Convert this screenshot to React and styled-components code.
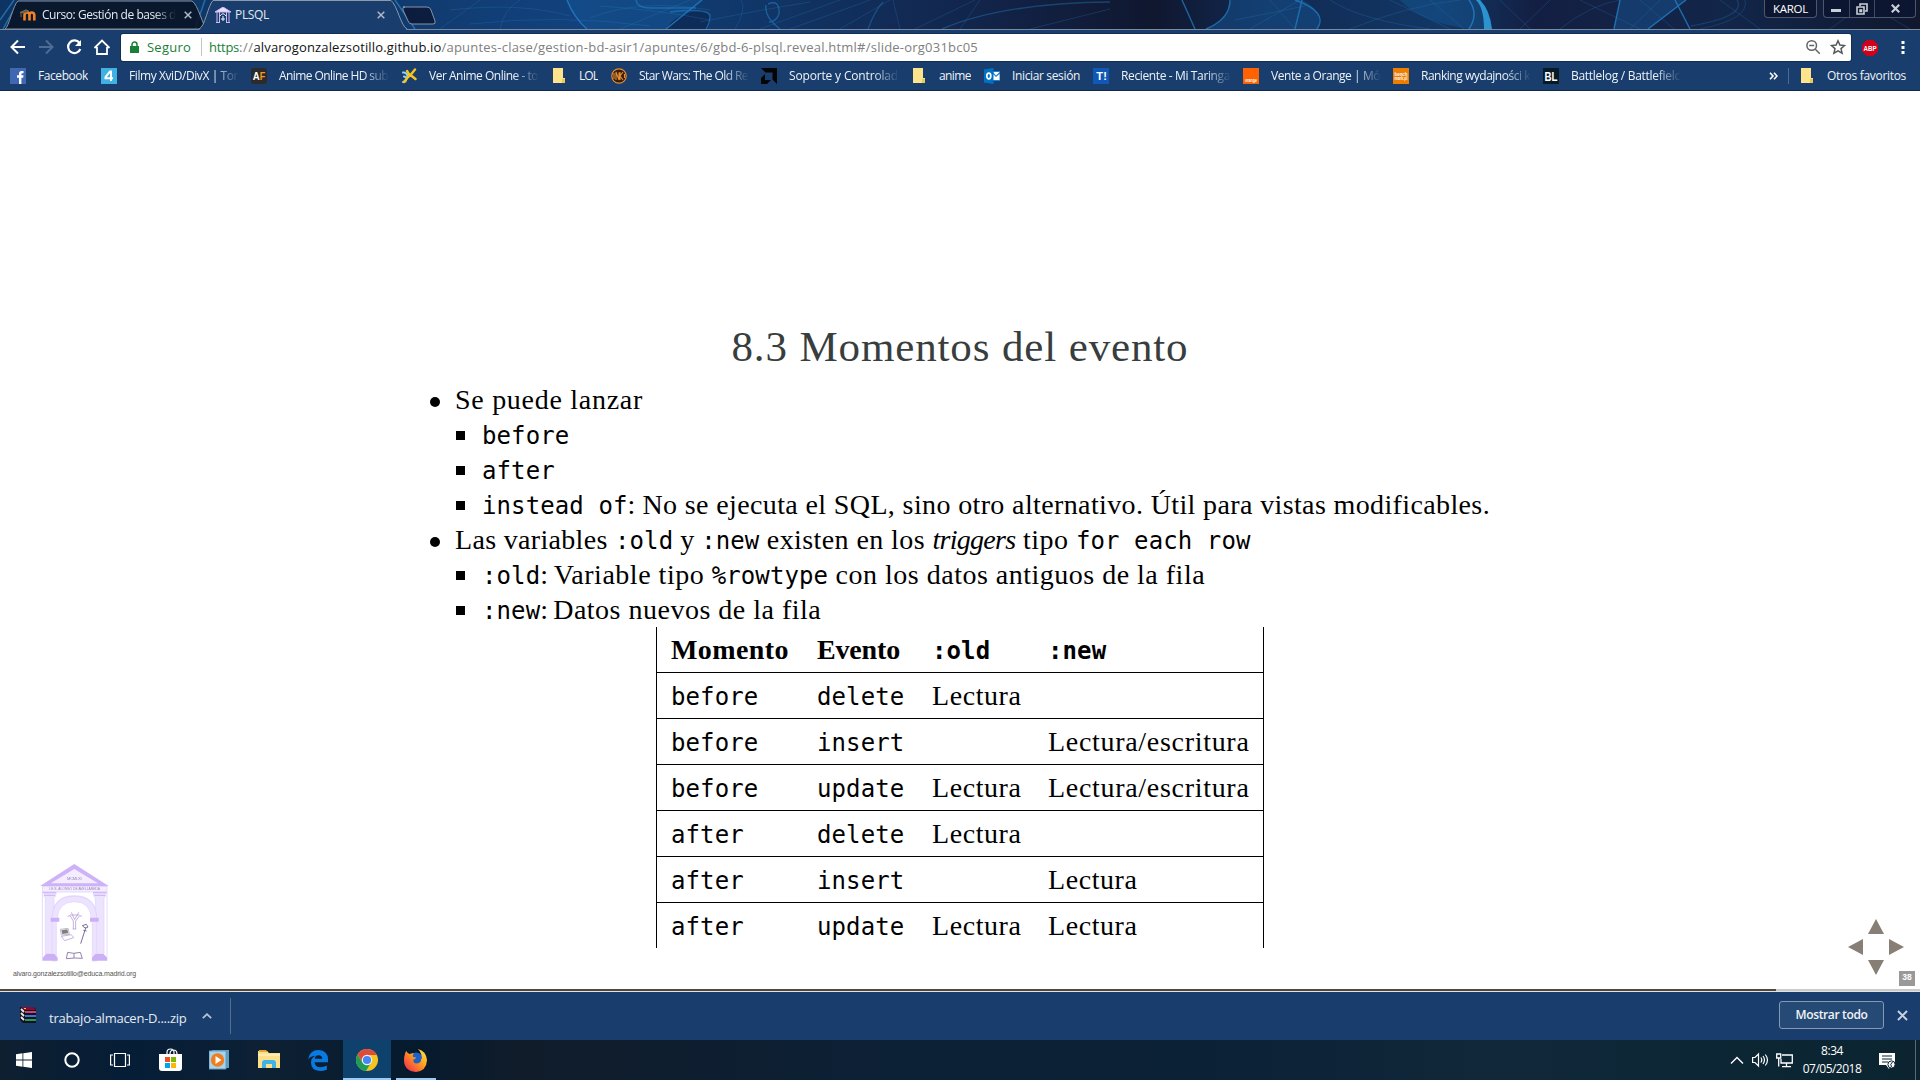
import React, { useLayoutEffect, useRef, useState } from "react";
import styled, { createGlobalStyle, css } from "styled-components";

const UI = `"Open Sans", "Noto Sans", sans-serif`;
const SERIF = `"Liberation Serif", serif`;
const MONO = `"DejaVu Sans Mono", monospace`;

const GlobalStyle = createGlobalStyle`
  * { box-sizing: border-box; }
  body { margin: 0; background: #fff; overflow: hidden; }
  svg { display: block; flex: none; }
`;

/* Text run tracked so that it fills a given advance width. */
const Run = styled.span`
  white-space: pre;
  font-style: ${(p) => (p.$italic ? "italic" : "inherit")};
`;

function Fit({ w, italic, children }) {
  const ref = useRef(null);
  const [spacing, setSpacing] = useState(0);
  useLayoutEffect(() => {
    const natural = ref.current.getBoundingClientRect().width;
    setSpacing((w - natural) / children.length);
  }, [w, children]);
  return (
    <Run ref={ref} $italic={italic} style={{ letterSpacing: spacing }}>
      {children}
    </Run>
  );
}

const Screen = styled.div`
  width: 1920px;
  height: 1080px;
  display: flex;
  flex-direction: column;
  overflow: hidden;
  font-family: ${UI};
`;

/* ---------- tab strip ---------- */
const TabStrip = styled.header`
  position: relative;
  height: 29px;
  flex: none;
  display: flex;
  padding-left: 4px;
  background: #122a52;
`;
const Wallpaper = styled.svg`
  position: absolute;
  left: 0;
  top: 0;
`;
const Tab = styled.div`
  position: relative;
  width: 208px;
  height: 29px;
  margin-right: -13px;
  padding: 0 0 5px 16px;
  display: flex;
  align-items: flex-end;
  font-size: 12px;
  line-height: 18px;
  color: #e4e9f0;
  z-index: ${(p) => (p.$active ? 2 : 1)};
`;
const TabShape = styled.svg`
  position: absolute;
  left: 0;
  top: 0;
`;
const TabIcon = styled.div`
  position: relative;
  width: 16px;
  height: 18px;
  margin-right: ${(p) => p.$gap}px;
  display: flex;
  align-items: center;
`;
const TabLabel = styled.div`
  position: relative;
  width: 136px;
  overflow: hidden;
  white-space: nowrap;
  ${(p) =>
    p.$fade &&
    css`
      mask-image: linear-gradient(90deg, #000 112px, transparent 134px);
    `}
`;
const TabClose = styled.div`
  position: relative;
  margin: 0 0 5px 6px;
`;
const NewTab = styled.svg`
  position: relative;
  margin: 6px 0 0 7px;
`;
const WindowControls = styled.div`
  position: relative;
  margin-left: auto;
  padding-right: 4px;
  height: 18px;
  display: flex;
  gap: 6px;
`;
const ControlBox = styled.div`
  height: 18px;
  display: flex;
  border: 1px solid #4c566f;
  border-top: 0;
  border-radius: 0 0 4px 4px;
  background: #0d1630;
  color: #fff;
  font-size: 11.5px;
  line-height: 17px;
  padding: 0 ${(p) => p.$pad || 0}px;
`;
const ControlButton = styled.div`
  width: ${(p) => p.$w}px;
  display: flex;
  align-items: center;
  justify-content: center;
  & + & { border-left: 1px solid #3f4961; }
`;

/* ---------- toolbar ---------- */
const Toolbar = styled.div`
  height: 33px;
  flex: none;
  display: flex;
  align-items: center;
  border-top: 1px solid #7e8a9c;
  background: #193e6d;
  padding: 3px 9px 0 9px;
`;
const NavIcons = styled.div`
  width: 112px;
  display: flex;
  align-items: center;
  gap: 10px;
  padding-bottom: 1px;
`;
const Omnibox = styled.div`
  width: 1730px;
  height: 27px;
  display: flex;
  align-items: center;
  border-radius: 2px;
  background: #fff;
  box-shadow: 0 0 0 1px #122e54;
  padding: 0 5px 2px 9px;
  font-size: 13px;
  line-height: 20px;
  color: #808080;
`;
const Secure = styled.span`
  margin: 0 9px 0 8px;
  color: #188038;
`;
const Divider = styled.div`
  width: 1px;
  height: ${(p) => p.$h}px;
  margin: ${(p) => p.$m || 0};
  background: ${(p) => p.$color};
  flex: none;
`;
const Green = styled.span`color: #188038;`;
const Dark = styled.span`color: #111;`;
const Push = styled.div`
  margin-left: auto;
  display: flex;
  align-items: center;
  gap: ${(p) => p.$gap || 0}px;
`;

/* ---------- bookmarks ---------- */
const Bookmarks = styled.nav`
  height: 29px;
  flex: none;
  display: flex;
  align-items: center;
  gap: 13px;
  padding: 0 14px 0 10px;
  background: #193e6d;
  border-bottom: 1px solid #10294b;
  font-size: 12px;
  line-height: 18px;
  color: #eef2f7;
`;
const Bookmark = styled.div`
  display: flex;
  align-items: center;
  gap: 12px;
`;
const BookmarkLabel = styled.div`
  width: ${(p) => p.$w}px;
  overflow: hidden;
  white-space: nowrap;
  ${(p) =>
    p.$w === 109 &&
    css`
      mask-image: linear-gradient(90deg, #000 84px, transparent 110px);
    `}
`;

/* ---------- slide ---------- */
const Page = styled.main`
  position: relative;
  height: 898px;
  flex: none;
  background: #fff;
  padding-top: 231px;
  display: flex;
  flex-direction: column;
  align-items: center;
  font-family: ${SERIF};
  color: #000;
`;
const Title = styled.h3`
  margin: 0 0 10px;
  font-size: 43px;
  line-height: 50px;
  font-weight: 400;
  color: #383d3d;
`;
const List = styled.ul`
  width: ${(p) => (p.$sub ? "auto" : "1058px")};
  margin: 0;
  padding: 0 0 0 ${(p) => (p.$sub ? 24 : 0)}px;
  list-style: none;
  font-size: 28px;
  line-height: 35px;
`;
const Item = styled.li`
  display: flex;
  height: 35px;
  white-space: pre;
`;
const Bullet = styled.span`
  width: ${(p) => (p.$square ? 9 : 10)}px;
  height: ${(p) => (p.$square ? 9 : 10)}px;
  flex: none;
  background: #000;
  margin: ${(p) => (p.$square ? "14px 17px 0 1px" : "15px 15px 0 -1px")};
  border-radius: ${(p) => (p.$square ? 0 : "50%")};
`;
const Code = styled.code`
  font-family: ${MONO};
  font-size: 24px;
  line-height: 0;
  letter-spacing: 0.1px;
  white-space: pre;
`;
const Table = styled.table`
  width: 608px;
  table-layout: fixed;
  border-spacing: 0;
  border-left: 1px solid #000;
  border-right: 1px solid #000;
  font-size: 28px;
  line-height: 43px;
`;
const Cell = styled.td`
  height: ${(p) => (p.$last ? 45 : 46)}px;
  padding: 1px 0 0 14px;
  vertical-align: top;
  text-align: left;
  white-space: nowrap;
  font-weight: ${(p) => (p.$head ? 700 : 400)};
  border-bottom: ${(p) => (p.$last ? 0 : "1px solid #000")};
`;
const Controls = styled.svg`
  position: absolute;
  left: 1848px;
  top: 827px;
`;
const SlideNumber = styled.div`
  position: absolute;
  left: 1899px;
  top: 880px;
  width: 16px;
  height: 15px;
  background: #999;
  color: #fff;
  font: 700 8.5px/13px "Liberation Sans", sans-serif;
  text-align: center;
`;
const LogoArt = styled.div`
  position: absolute;
  left: 30px;
  top: 764px;
  opacity: 0.9;
`;
const Mail = styled.div`
  position: absolute;
  left: 13px;
  top: 877px;
  font: 7px/12px "Liberation Sans", sans-serif;
  color: #555;
`;
const Progress = styled.div`
  height: 3px;
  flex: none;
  background: linear-gradient(90deg, #51483d 1776px, #ccc 1776px) top / 100% 2px no-repeat #e2e2e2;
`;

/* ---------- download shelf ---------- */
const Shelf = styled.div`
  height: 48px;
  flex: none;
  display: flex;
  align-items: center;
  background: #193e6d;
  padding: 0 12px 0 20px;
  color: #e6ebf1;
  font-size: 13px;
  line-height: 20px;
`;
const FileIcon = styled.div`
  margin-bottom: 3px;
`;
const FileName = styled.div`
  margin: 4px 15px 0 13px;
`;
const ShowAll = styled.button`
  width: 105px;
  height: 28px;
  margin: 0 13px 2px 0;
  padding: 0;
  border: 1px solid #8699b3;
  border-radius: 3px;
  background: #264a76;
  color: #f0f3f7;
  font: 600 12px/24px ${UI};
`;
const ShelfClose = styled.div`
  margin-bottom: 1px;
`;

/* ---------- taskbar ---------- */
const Taskbar = styled.footer`
  height: 40px;
  flex: none;
  display: flex;
  background: linear-gradient(90deg, #0e1f30 0, #051d36 130px, #0d2034 260px, #061a2e 420px, #101c2a 520px, #0c2036 900px, #0b2136 1200px, #10283a 1500px, #0d2635 1700px, #0b2430 1920px);
  color: #fff;
`;
const Task = styled.div`
  width: ${(p) => p.$w || 48}px;
  height: 40px;
  display: flex;
  align-items: center;
  justify-content: center;
  background: ${(p) => (p.$active ? "#0e416c" : "transparent")};
  border-bottom: ${(p) => (p.$active ? "2px solid #9ccaf2" : 0)};
  padding: ${(p) => (p.$active ? 2 : 0)}px ${(p) => p.$inset || 0}px 0 0;
`;
const RunningTask = styled(Task)`
  width: 40px;
  margin-left: 5px;
  padding: 2px 1px 0 0;
  border-bottom: 2px solid #9ccaf2;
`;
const Tray = styled.div`
  margin-left: auto;
  display: flex;
  align-items: center;
`;
const TrayIcon = styled.div`
  margin-right: ${(p) => p.$gap}px;
`;
const Clock = styled.div`
  width: 60px;
  margin-right: 17px;
  font-size: 12px;
  line-height: 18px;
  text-align: center;
`;

/* ---------- drawings ---------- */
const TempleSmall = () => (
  <svg width="16" height="16" viewBox="0 0 16 16" fill="none" stroke="#cdb8f2">
    <path d="M0 5 8 0l8 5z" fill="#e9defc" />
    <path d="M2 5v10M4.500 5v10M11.500 5v10M14 5v10" />
    <path d="M5 9q3-4.500 6 0M8 9v5M6 12h4" stroke="#f6f2ff" />
    <path d="M1 15.500h4M11 15.500h4" />
  </svg>
);
const Moodle = () => (
  <svg width="16" height="12" viewBox="0 0 16 12" fill="none">
    <path d="M4.500 11.500V6q0-2.500 2.500-2.500T9.500 6v5.500M9.500 6q0-2.500 2.300-2.500T14.300 6v5.500" stroke="#f58220" strokeWidth="2.600" />
    <path d="M0 3.500 6 .8l3 1.500-4 1.700zM1 4v4" fill="#6b5540" stroke="#8d7760" strokeWidth=".8" />
  </svg>
);
const Folder = () => (
  <svg width="16" height="16" viewBox="0 0 16 16">
    <path d="M2 0h10v10h2v5H2z" fill="#fde38b" />
    <path d="M11 11h3v4h-3z" fill="#eec94f" />
  </svg>
);
const Sq = ({ bg, children }) => (
  <svg width="16" height="16" viewBox="0 0 16 16">
    <rect width="16" height="16" fill={bg} />
    {children}
  </svg>
);
const G = ({ x = 8, y = 12, s = 11, f = "#fff", children, len }) => (
  <text x={x} y={y} fontSize={s} fill={f} fontWeight="700" textAnchor="middle" fontFamily="Liberation Sans, sans-serif" textLength={len} lengthAdjust="spacingAndGlyphs">
    {children}
  </text>
);
const icons = {
  facebook: (
    <Sq bg="#4267b2">
      <path d="M9 16V9.800H7V7.300h2V5.500Q9 3 11.600 3H13.500v2.300h-1.200q-.9 0-.9.900v1.100h2.100l-.3 2.500h-1.800V16z" fill="#fff" />
    </Sq>
  ),
  four: (
    <Sq bg="#3fb2e3">
      <path d="M10 13V3.500H9L4.500 9v1.300H12" fill="none" stroke="#fff" strokeWidth="2" />
    </Sq>
  ),
  af: (
    <svg width="16" height="16" viewBox="0 0 16 16">
      <rect width="16" height="16" rx="3" fill="#2c2a2b" />
      <G x={5.2} y={12} s={10.5} len={7}>A</G>
      <G x={11.5} y={12} s={10.5} f="#f59a23" len={5.5}>F</G>
    </svg>
  ),
  runner: (
    <svg width="16" height="16" viewBox="0 0 16 16" fill="none" strokeLinecap="round">
      <path d="M2 4.500q3-.5 4.500 3M3 8.500l3 1-1.500 4-2.500.5" stroke="#8fd3f4" strokeWidth="2" />
      <path d="M14 1.500 9.500 7l5 4M9.500 7 7 9l-4 5M6 3l2.500 4" stroke="#f8c51c" strokeWidth="2.400" />
    </svg>
  ),
  swtor: (
    <svg width="16" height="16" viewBox="0 0 16 16" fill="none" stroke="#e08f36">
      <circle cx="8" cy="8" r="7.200" fill="#3c1c08" strokeWidth="1.200" />
      <path d="M5 12V4l3 8V4.500M12 4 9 8l3 4M9 4v8M3 5v6M13.500 6v4" strokeWidth="1.100" />
    </svg>
  ),
  amd: (
    <svg width="16" height="16" viewBox="0 0 16 16">
      <path d="M0 0h16v16l-4.500-4.500v-7h-7zM4 6v6h6l-4 4H0v-6z" fill="#050505" />
    </svg>
  ),
  outlook: (
    <svg width="16" height="16" viewBox="0 0 16 16">
      <path d="M8 3h8v10H8z" fill="#1b7fd6" />
      <path d="M9 4h6.500L12 7.500zM9 6l3 3 3.500-3v6H9z" fill="#fff" />
      <path d="M0 1.500 9.500 0v16L0 14.500z" fill="#0072c6" />
      <ellipse cx="4.800" cy="8" rx="2" ry="2.800" fill="none" stroke="#fff" strokeWidth="1.700" />
    </svg>
  ),
  taringa: (
    <Sq bg="#0f58b8">
      <G x={6.5}>T</G>
      <G x={12}>!</G>
    </Sq>
  ),
  orange: (
    <Sq bg="#ff6200">
      <G y={13.5} s={4.5} len={12}>orange</G>
    </Sq>
  ),
  bench: (
    <Sq bg="#ef7d00">
      <G y={7.5} s={5} len={13}>bench</G>
      <G y={12} s={5} len={13}>mark.pl</G>
    </Sq>
  ),
  bl: (
    <Sq bg="#071a28">
      <G y={13} s={13} len={13}>BL</G>
    </Sq>
  ),
  folder: <Folder />,
};

const bookmarks = [
  ["facebook", "Facebook", 50],
  ["four", "Filmy XviD/DivX | Tor", 109],
  ["af", "Anime Online HD sub", 109],
  ["runner", "Ver Anime Online - to", 109],
  ["folder", "LOL", 19],
  ["swtor", "Star Wars: The Old Re", 109],
  ["amd", "Soporte y Controlad", 109],
  ["folder", "anime", 32],
  ["outlook", "Iniciar sesión", 68],
  ["taringa", "Reciente - Mi Taringa", 109],
  ["orange", "Vente a Orange | Mó", 109],
  ["bench", "Ranking wydajności k", 109],
  ["bl", "Battlelog / Battlefielc", 109],
];

const Smoke = () => (
  <Wallpaper width="1920" height="29" viewBox="0 0 1920 29" fill="none">
    <defs>
      <linearGradient id="sky">
        <stop offset="0" stopColor="#0d3462" />
        <stop offset=".2" stopColor="#103a6d" />
        <stop offset=".3" stopColor="#12417d" />
        <stop offset=".38" stopColor="#10386b" />
        <stop offset=".5" stopColor="#12264d" />
        <stop offset=".6" stopColor="#10172f" />
        <stop offset=".66" stopColor="#112a52" />
        <stop offset=".75" stopColor="#123765" />
        <stop offset=".8" stopColor="#131f42" />
        <stop offset=".9" stopColor="#12264a" />
        <stop offset="1" stopColor="#10182e" />
      </linearGradient>
    </defs>
    <rect width="1920" height="29" fill="url(#sky)" />
    <g opacity=".55">
      <path d="M567 0q8 20 21 29h78L702 0z" fill="#145391" />
      <path d="M1230 0q0 19-24 29h111q8-18-15-29z" fill="#15508c" />
      <path d="M1400 0q20 22 69 29h23L1481 0z" fill="#15538d" />
      <path d="M1620 0l-6 29h34l38-29z" fill="#15508a" />
      <path d="M666 29q10-16 36-19 12 5 5 19z" fill="#0d2148" />
    </g>
    <g stroke="#2a7fc0" strokeWidth="1" opacity=".25">
      <path d="M440 29 480 0M500 29q4-20 20-29M450 10q70-8 120 6M470 24q90-10 180 2M590 18q50-20 120-8M620 29 690 0M735 29q12-20 6-29M760 29 840 0M790 29q50-18 80-29M840 29l50-29M900 29 893 0M915 29l60-29M960 29l20-29M1030 29l80-20M700 22q60-12 110-20M600 6q60 4 110 14" />
      <path d="M1250 29 1300 0M1235 20l70-14M1270 0l25 29M1330 0q30 20 100 29M1350 29q60-24 110-29M1390 0l60 29M1430 0l34 29M1500 0l30 29M1520 29l30-29M1560 29q30-24 60-29M1580 0l60 29M1630 29l30-29M1640 0l34 29M1700 29q50-10 45-29M1720 0l40 29M1830 29l40-29M1860 0l50 29" />
    </g>
    <g stroke="#2585cc" strokeWidth="1.400" opacity=".75">
      <path d="M567 0q7 18 20 29M702 0l-36 29" />
      <path d="M636 0q1 8 14 8h46M670 12q36-4 40 3 0 8-4 14M766 5q-2 12 14 24M768 4q12-5 11 10-3 8-10 8" opacity=".7" />
      <path d="M883 2q-8 8-15 27M942 29q60-26 168-27" opacity=".5" />
      <path d="M1230 0q0 19-24 29M1295 0q34 12 22 29M1302 0l-7 29M1182 0l13 29" opacity=".9" />
      <path d="M1469 0q10 14 0 29M1620 0l-6 29M1686 0l-38 29M1675 0l15 29" />
      <path d="M1737 0q10 16-46 26" opacity=".35" />
    </g>
    <path d="M1476 0q8 8 8 29h8Q1490 10 1480 0z" fill="#2fa3e0" opacity=".85" />
    <path d="M0 20 14 0M3 29l10-18M205 0l-10 29M395 0l20 29" stroke="#35a5e6" strokeWidth="1.500" opacity=".5" />
  </Wallpaper>
);

const X = ({ size = 8, color = "#aeb9c8", sw = 1.5 }) => (
  <svg width={size} height={size} viewBox="0 0 8 8">
    <path d="M.7.7l6.600 6.600M7.300.7.7 7.300" stroke={color} strokeWidth={sw} />
  </svg>
);

const Logo = () => (
  <svg width="90" height="115" viewBox="0 0 270 345" fill="none">
    <path d="M133 27 30 93h206z" fill="#c9aaf8" />
    <path d="M133 42 62 85h142z" fill="#f3ecff" />
    <rect x="37" y="94" width="194" height="17" fill="#f3ecff" stroke="#d9c6fb" strokeWidth="2" />
    <g fill="#ebe1fe" stroke="#dccafb" strokeWidth="2">
      <path d="M42 111h35v12l-5 6v168H46V129l-4-6zM191 111h36v12l-5 6v168h-26V129l-5-6z" />
      <path d="M66 318V192q0-70 67-70t67 70v126h-13V192q0-54-54-54t-54 54v126z" />
      <path d="M66 196q0-72 67-72t67 72h-16q0-56-51-56t-51 56z" />
    </g>
    <path d="M37 111v206M231 111v206" stroke="#e4d6fc" strokeWidth="3" />
    <path d="M62 188h26v12H62zM180 188h26v12h-26zM38 317v-9l10-11h25l10 11v9zM186 317v-9l10-11h25l10 11v9z" fill="#c6a8f6" />
    <path d="M38 113h41M189 113h41M42 121h33M193 121h33" stroke="#cdb3f8" strokeWidth="4" />
    <path d="M130 222v-24l-10-16-7 2M137 222v-24l12-16 7 2M120 180h28M124 172l10 22 12-22M128 222h11" stroke="#b096d6" strokeWidth="2.500" />
    <path d="M91 223l23-3 4 18-24 2zM94 244l30-5 7 9-27 9z" stroke="#9f86c2" strokeWidth="2" />
    <path d="M94 226l18-3 3 12-18 2z" fill="#6f7565" />
    <path d="M152 266 168 216M157 212l12-4 5 8-8 4zM160 226l10 2" stroke="#6f5a8e" strokeWidth="3" />
    <path d="m113 292 18 3 20-3 6 18-24-1-24 2zM132 295v14" stroke="#8169a3" strokeWidth="2.800" />
    <text x="111" y="74" fontSize="12" fill="#8d74b3" textLength="44" fontFamily="Liberation Sans, sans-serif">MCMLXI</text>
    <text x="58" y="106" fontSize="10" fill="#8d74b3" textLength="152" fontFamily="Liberation Sans, sans-serif">I.E.S. ALONSO DE AVELLANEDA</text>
  </svg>
);

const rows = [
  ["before", "delete", "Lectura", ""],
  ["before", "insert", "", "Lectura/escritura"],
  ["before", "update", "Lectura", "Lectura/escritura"],
  ["after", "delete", "Lectura", ""],
  ["after", "insert", "", "Lectura"],
  ["after", "update", "Lectura", "Lectura"],
];
const colWidths = [146, 115, 116, 229];

function Browser() {
  return (
    <>
      <TabStrip>
        <Smoke />
        <Tab>
          <TabShape width="208" height="29" viewBox="0 0 208 29">
            <path d="M1 29C5 27 9 5 14 1h174c6 3 11 26 15 28z" fill="#0a1427" fillOpacity=".88" stroke="#8792a3" />
          </TabShape>
          <TabIcon $gap={6}><Moodle /></TabIcon>
          <TabLabel $fade><Fit w={134}>Curso: Gestión de bases d</Fit></TabLabel>
          <TabClose><X /></TabClose>
        </Tab>
        <Tab $active>
          <TabShape width="208" height="30" viewBox="0 0 208 30">
            <path d="M0 30C6 27 9 5 14 .5h178c6 4 10 26 16 29.500z" fill="#193e6d" />
            <path d="M0 29C6 27 9 5 14 .5h178c6 4 10 26 16 28.500" fill="none" stroke="#8d98aa" />
          </TabShape>
          <TabIcon $gap={4}><TempleSmall /></TabIcon>
          <TabLabel><Fit w={34}>PLSQL</Fit></TabLabel>
          <TabClose><X /></TabClose>
        </Tab>
        <NewTab width="36" height="19" viewBox="0 0 36 19">
          <path d="M2 1h24q3 0 4 3l4 11q1 3-2 3H11q-3 0-4-3L2 4q-1-3 2-3z" fill="#0c1a38" fillOpacity=".9" stroke="#8593a8" />
        </NewTab>
        <WindowControls>
          <ControlBox $pad={8}><Fit w={35}>KAROL</Fit></ControlBox>
          <ControlBox>
            <ControlButton $w={25}>
              <svg width="11" height="6" viewBox="0 0 11 6"><path d="M0 3h10v3H0z" fill="#c9cfd8" /></svg>
            </ControlButton>
            <ControlButton $w={25}>
              <svg width="12" height="12" viewBox="0 0 12 12" fill="none" stroke="#c9cfd8" strokeWidth="1.600">
                <path d="M4 3V1h7v7H9" /><path d="M1 4h7v7H1z" /><path d="M4 7h1.500v1.500H4z" />
              </svg>
            </ControlButton>
            <ControlButton $w={41}><X size={9} color="#c9cfd8" sw={1.9} /></ControlButton>
          </ControlBox>
        </WindowControls>
      </TabStrip>

      <Toolbar>
        <NavIcons>
          <svg width="18" height="18" viewBox="0 0 18 18" fill="none" stroke="#fff" strokeWidth="2"><path d="M16 9H3M9 2.500 2.500 9 9 15.500" /></svg>
          <svg width="18" height="18" viewBox="0 0 18 18" fill="none" stroke="#4f6d94" strokeWidth="2"><path d="M2 9h13M9 2.500 15.500 9 9 15.500" /></svg>
          <svg width="18" height="18" viewBox="0 0 18 18" fill="none" stroke="#fff" strokeWidth="2.200"><path d="M14.500 5A6.300 6.300 0 1 0 15.300 11" /><path d="M16 2v6h-6z" fill="#fff" stroke="none" /></svg>
          <svg width="18" height="18" viewBox="0 0 18 18" fill="none" stroke="#fff" strokeWidth="1.800"><path d="M1.500 10 9 2.500l7.500 7.500M4 9v7h10V9" /></svg>
        </NavIcons>
        <Omnibox>
          <svg width="9" height="12" viewBox="0 0 9 12"><path d="M0 5h9v7H0z" fill="#188038" /><path d="M2 5V3.500a2.500 2.500 0 0 1 5 0V5" fill="none" stroke="#188038" strokeWidth="1.500" /></svg>
          <Secure><Fit w={44}>Seguro</Fit></Secure>
          <Divider $h={18} $color="#c4c4c4" $m="0 7px 0 1px" />
          <Green><Fit w={30}>https</Fit></Green>
          <Fit w={14.5}>://</Fit>
          <Dark><Fit w={188}>alvarogonzalezsotillo.github.io</Fit></Dark>
          <Fit w={536.5}>/apuntes-clase/gestion-bd-asir1/apuntes/6/gbd-6-plsql.reveal.html#/slide-org031bc05</Fit>
          <Push $gap={9}>
            <svg width="16" height="16" viewBox="0 0 16 16" fill="none" stroke="#5f6368" strokeWidth="1.500"><circle cx="6.700" cy="6.500" r="4.800" /><path d="m10.300 10.300 4.500 4.500M4.200 6.500h5" /></svg>
            <svg width="16" height="16" viewBox="0 0 16 16" fill="none" stroke="#55595e" strokeWidth="1.500"><path d="m8 1.800 1.900 4.300 4.600.4-3.500 3.100 1.100 4.600L8 11.800l-4.100 2.400L5 9.600 1.500 6.500l4.600-.4z" /></svg>
          </Push>
        </Omnibox>
        <Push $gap={21}>
          <svg width="16" height="16" viewBox="0 0 16 16"><path d="M4.700 0h6.600L16 4.700v6.600L11.300 16H4.700L0 11.300V4.700z" fill="#d0021b" /><G y={10.7} s={7.5} len={13}>ABP</G></svg>
          <svg width="12" height="16" viewBox="0 0 12 16" fill="#fff"><path d="M2.500 1h3v3h-3zM2.500 6h3v3h-3zM2.500 11h3v3h-3z" /></svg>
        </Push>
      </Toolbar>

      <Bookmarks>
        {bookmarks.map(([icon, label, w]) => (
          <Bookmark key={label}>
            {icons[icon]}
            <BookmarkLabel $w={w}><Fit w={w}>{label}</Fit></BookmarkLabel>
          </Bookmark>
        ))}
        <Push $gap={10}>
          <svg width="9" height="8" viewBox="0 0 9 8" fill="none" stroke="#fff" strokeWidth="1.600"><path d="m1 .8 3 3.200-3 3.200M5 .8 8 4 5 7.200" /></svg>
          <Divider $h={16} $color="#4c6a90" />
          <Bookmark>
            <Folder />
            <Fit w={79}>Otros favoritos</Fit>
          </Bookmark>
        </Push>
      </Bookmarks>
    </>
  );
}

function Slide() {
  return (
    <Page>
      <Title><Fit w={457}>8.3 Momentos del evento</Fit></Title>
      <List>
        <Item><Bullet /><Fit w={188}>Se puede lanzar</Fit></Item>
        <List $sub>
          <Item><Bullet $square /><span><Code>before</Code></span></Item>
          <Item><Bullet $square /><span><Code>after</Code></span></Item>
          <Item>
            <Bullet $square />
            <span><Code>instead of</Code><Fit w={15}>: </Fit><Fit w={847.5}>No se ejecuta el SQL, sino otro alternativo. Útil para vistas modificables.</Fit></span>
          </Item>
        </List>
        <Item>
          <Bullet />
          <span>
            <Fit w={160}>Las variables </Fit><Code>:old</Code><Fit w={28}> y </Fit><Code>:new</Code>
            <Fit w={173}> existen en los </Fit><Fit w={83} italic>triggers</Fit><Fit w={60.5}> tipo </Fit><Code>for each row</Code>
          </span>
        </Item>
        <List $sub>
          <Item>
            <Bullet $square />
            <span><Code>:old</Code><Fit w={13}>: </Fit><Fit w={158}>Variable tipo </Fit><Code>%rowtype</Code><Fit w={377}> con los datos antiguos de la fila</Fit></span>
          </Item>
          <Item>
            <Bullet $square />
            <span><Code>:new</Code><Fit w={13}>: </Fit><Fit w={268}>Datos nuevos de la fila</Fit></span>
          </Item>
        </List>
      </List>
      <Table>
        <colgroup>{colWidths.map((w) => <col key={w} width={w} />)}</colgroup>
        <tbody>
          <tr>
            <Cell as="th" $head><Fit w={118}>Momento</Fit></Cell>
            <Cell as="th" $head><Fit w={83}>Evento</Fit></Cell>
            <Cell as="th" $head><Code>:old</Code></Cell>
            <Cell as="th" $head><Code>:new</Code></Cell>
          </tr>
          {rows.map((r, i) => (
            <tr key={i}>
              {r.map((c, j) => (
                <Cell key={j} $last={i === rows.length - 1}>
                  {j < 2 ? <Code>{c}</Code> : c && <Fit w={c.length > 7 ? 201.5 : 89.5}>{c}</Fit>}
                </Cell>
              ))}
            </tr>
          ))}
        </tbody>
      </Table>
      <LogoArt><Logo /></LogoArt>
      <Mail><Fit w={123}>alvaro.gonzalezsotillo@educa.madrid.org</Fit></Mail>
      <Controls width="56" height="58" viewBox="0 0 56 58" fill="#877e76">
        <path d="m28 1 8 15H20zM28 57l8-15H20zM0 29l15-8v16zM56 29l-15-8v16z" />
      </Controls>
      <SlideNumber>38</SlideNumber>
    </Page>
  );
}

function Desktop() {
  return (
    <>
      <Shelf>
        <FileIcon>
          <svg width="16" height="16" viewBox="0 0 16 16">
            <path d="M0 0h13l3 2v14H3L0 13z" fill="#15101a" />
            <path d="M1 0h12l3 3H4z" fill="#7c1230" /><path d="M5 4h11v2H5z" fill="#d83a7c" />
            <path d="M5 8h11v2H5z" fill="#2f7fd0" /><path d="M5 12h11v2H5z" fill="#1f9a62" />
            <path d="M1 2l3 3M1 6l3 3M1 10l3 3" stroke="#e9e9e9" strokeWidth="1.800" /><path d="M4 1h2v1H4z" fill="#f5d020" />
          </svg>
        </FileIcon>
        <FileName><Fit w={137.5}>trabajo-almacen-D....zip</Fit></FileName>
        <svg width="10" height="6" viewBox="0 0 10 6" fill="none" stroke="#b7c3d3" strokeWidth="1.800"><path d="m.8 5.200 4.200-4 4.200 4" /></svg>
        <Divider $h={36} $color="#54708f" $m="0 0 0 18px" />
        <Push>
          <ShowAll><Fit w={72}>Mostrar todo</Fit></ShowAll>
          <ShelfClose><X size={11} color="#c9d2de" sw={1.4} /></ShelfClose>
        </Push>
      </Shelf>
      <Taskbar>
        <Task>
          <svg width="16" height="16" viewBox="0 0 16 16" fill="#fff"><path d="M0 2.200 6.500 1.300v6.300H0zM7.300 1.200 16 0v7.600H7.300zM0 8.400h6.500v6.300L0 13.800zM7.300 8.400H16V16l-8.700-1.200z" /></svg>
        </Task>
        <Task><svg width="16" height="16" viewBox="0 0 16 16"><circle cx="8" cy="8" r="6.700" fill="none" stroke="#fff" strokeWidth="2" /></svg></Task>
        <Task><svg width="20" height="16" viewBox="0 0 20 16" fill="none" stroke="#fff" strokeWidth="1.200"><path d="M4.500 1.500h11v13h-11zM3 3H.6v10H3M17 3h2.400v10H17" /></svg></Task>
        <Task $w={53}>
          <svg width="23" height="24" viewBox="0 0 23 24">
            <path d="M0 6h23v14q0 3-3 3H3q-3 0-3-3z" fill="#fff" />
            <path d="M8 6V4.500Q8 1 11.500 1T15 4.500V6M11 6q0-4 3.500-4T18 6" fill="none" stroke="#fff" strokeWidth="1.200" />
            <path d="M6 9h5v5H6z" fill="#f25022" /><path d="M12 9h5v5h-5z" fill="#7fba00" /><path d="M6 15h5v5H6z" fill="#00a4ef" /><path d="M12 15h5v5h-5z" fill="#ffb900" />
          </svg>
        </Task>
        <Task $w={45}>
          <svg width="21" height="20" viewBox="0 0 21 20">
            <path d="M3 0h17v18H3z" fill="#5e9fc4" /><path d="M0 1h17v18H0z" fill="#a9d3e8" stroke="#5d9cc2" /><circle cx="8.500" cy="10" r="6.700" fill="#f07c1d" /><path d="m6.500 6 6 4-6 4z" fill="#fff" />
          </svg>
        </Task>
        <Task $w={54}>
          <svg width="22" height="20" viewBox="0 0 22 20">
            <path d="M0 1h9l2 2h11v15H0z" fill="#fbdf8b" /><path d="M1 0h7l2 2H1z" fill="#e3a72f" /><path d="M0 4h22v2H0z" fill="#fdebb0" />
            <path d="M4 18v-5q0-3 3-3h8q3 0 3 3v5h-4v-4H8v4z" fill="#3fb3e6" />
          </svg>
        </Task>
        <Task $w={47} $inset={4}>
          <svg width="20" height="21" viewBox="0 0 20 21">
            <path d="M0 9.500Q1.500 0 10.500 0 20 .5 20 9.500v2.700H6.500q.5 5 6 5 3.500 0 6.300-1.700v4.200Q15.500 21 12 21 3 20.500 3 12.500 3 8 7.500 5.800 3 5.800 0 9.500zM6.700 8.800h7.500q0-3.600-3.600-3.600T6.700 8.800z" fill="#0a7ae0" />
          </svg>
        </Task>
        <Task $active>
          <svg width="22" height="22" viewBox="0 0 22 22">
            <circle cx="11" cy="11" r="11" fill="#f4c420" />
            <path d="M1.500 5.500A11 11 0 0 0 10 22l5-8.500L6.500 13.500z" fill="#1d9d58" />
            <path d="M11 6h9.800Q18 0 11 0 5 0 1.500 5.500L6.500 13z" fill="#dd4b3e" />
            <circle cx="11" cy="11" r="5.200" fill="#f4f4f4" /><circle cx="11" cy="11" r="4.100" fill="#4688f1" />
          </svg>
        </Task>
        <RunningTask>
          <svg width="23" height="23" viewBox="0 0 23 23">
            <defs><linearGradient id="fox" x1="1" y1="0" x2="0" y2="1"><stop offset="0" stopColor="#fff14a" /><stop offset=".45" stopColor="#ff9a1c" /><stop offset="1" stopColor="#ef1d5a" /></linearGradient></defs>
            <circle cx="12" cy="11" r="7.500" fill="#1c62c9" />
            <path d="M1 5q0-2 1.500-3 .5 2 3 3Q8 4 10 4.500 8 6 9 8l3 .5q0 1.500-2.500 2-1 4 3.500 4 4.500-.5 4-5 1 0 1 1.500Q18 4 14 0q8 2 9 11-.5 11-11 12Q0 22 0 11q0-3.500 1-6z" fill="url(#fox)" />
          </svg>
        </RunningTask>
        <Tray>
          <TrayIcon $gap={8}>
            <svg width="14" height="10" viewBox="0 0 14 10" fill="none" stroke="#fff" strokeWidth="1.400"><path d="m1 8.500 6-6 6 6" /></svg>
          </TrayIcon>
          <TrayIcon $gap={7}>
            <svg width="17" height="16" viewBox="0 0 17 16" fill="none" stroke="#fff" strokeWidth="1.200"><path d="M.6 5.500H3L6.500 2v12L3 10.500H.6zM8.800 5.500q2 2.500 0 5M11 4q3 4 0 8M13.300 2.500q4.400 5.500 0 11" /></svg>
          </TrayIcon>
          <TrayIcon $gap={9}>
            <svg width="17" height="15" viewBox="0 0 17 15" fill="none" stroke="#fff" strokeWidth="1.300"><path d="M6 2h10.300v8H5V6M10.500 10v3.500M6 13.600h9M.7 1h4v4h-4zM2.700 5v8.500" /></svg>
          </TrayIcon>
          <Clock>
            <div><Fit w={22}>8:34</Fit></div>
            <div><Fit w={58.5}>07/05/2018</Fit></div>
          </Clock>
          <svg width="17" height="17" viewBox="0 0 17 17"><path d="M0 1h16v12h-4l-2 4-3-4H0z" fill="#fff" /><path d="M3 4h10M3 7h10M3 10h6" stroke="#0b2430" strokeWidth="1.200" /><circle cx="12.500" cy="12.500" r="3.600" fill="#fff" stroke="#0b2430" /><path d="M13.500 10q-3 2-1 5" stroke="#0b2430" fill="none" /></svg>
          <Divider $h={40} $color="#5a6b78" $m="0 4px 0 19px" />
        </Tray>
      </Taskbar>
    </>
  );
}

export default function App() {
  return (
    <Screen>
      <GlobalStyle />
      <Browser />
      <Slide />
      <Progress />
      <Desktop />
    </Screen>
  );
}
